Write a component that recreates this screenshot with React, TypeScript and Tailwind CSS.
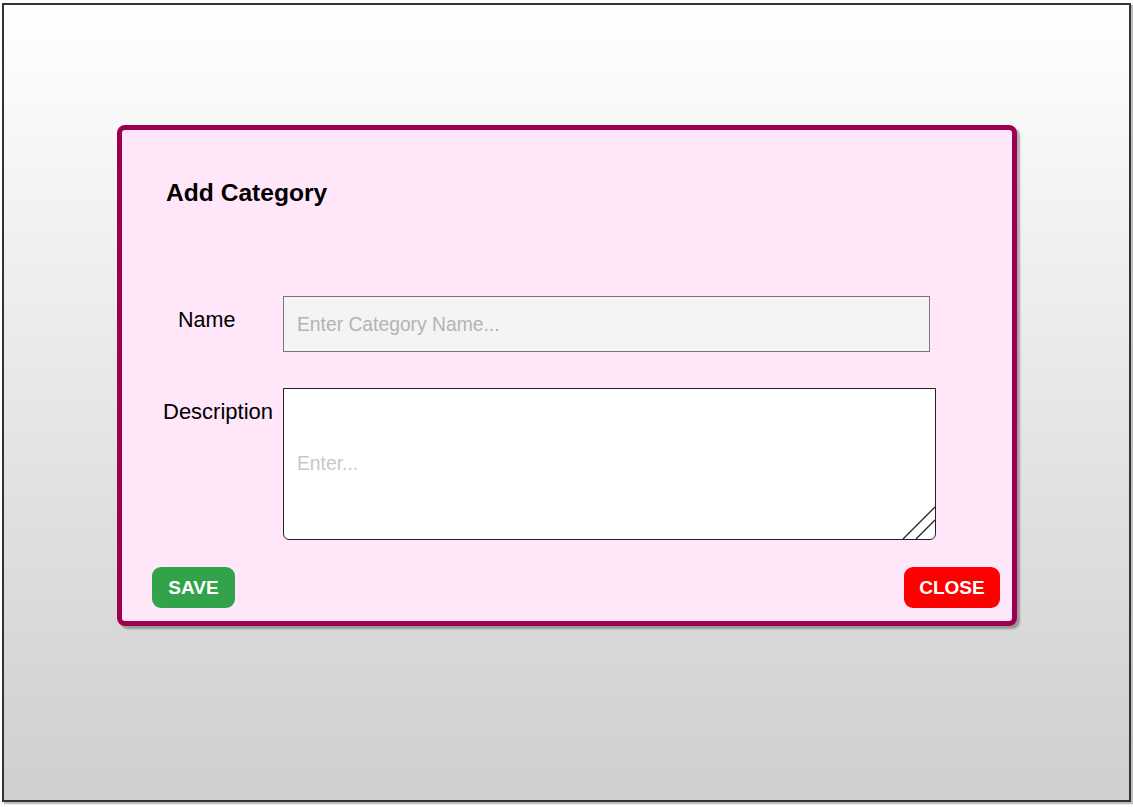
import React from "react";

const App = () => {
    return (
        <div className="w-[1133px] h-[807px] bg-white pt-[3px] pl-[2px] overflow-hidden" style={{ fontFamily: '"Liberation Sans", Arial, sans-serif' }}>
            <div className="w-[1129px] h-[799px] border-2 border-[#333333] bg-gradient-to-b from-white to-[#cfcfcf] pt-[120px] pl-[113px] shadow-[2px_2px_1px_rgba(0,0,0,0.25)]">
                <div className="w-[900px] h-[501px] border-[5px] border-[#9c0050] rounded-[8px] bg-[#ffe6f8] shadow-[3px_3px_2px_rgba(0,0,0,0.3)] flex flex-col">
                    <h2 className="ml-[44px] mt-[49px] text-[24.6px] leading-[28px] font-bold text-black">Add Category</h2>

                    <div className="flex items-start mt-[89px]">
                        <label className="w-[161px] pl-[56px] pt-[10px] text-[21.5px] leading-[28px] text-black">Name</label>
                        <input
                            type="text"
                            placeholder="Enter Category Name..."
                            className="w-[647px] h-[56px] bg-[#f4f4f4] border-[1.5px] border-[#777777] px-[13px] pt-[2px] text-[19.3px] text-black placeholder:text-[#b3b3b3] outline-none"
                        />
                    </div>

                    <div className="flex items-start mt-[36px]">
                        <label className="w-[161px] pl-[41px] pt-[10px] text-[22px] leading-[28px] text-black">Description</label>
                        <div className="relative w-[653px] h-[152px]">
                            <textarea
                                placeholder="Enter..."
                                className="w-full h-full resize-none bg-white border-[1.5px] border-[#222222] rounded-b-[6px] px-[13px] pt-[63px] text-[19.3px] leading-[24px] text-black placeholder:text-[#c8c8c8] outline-none"
                            />
                            <svg className="absolute right-0 bottom-0" width="34" height="34" viewBox="0 0 34 34" fill="none" stroke="#222" strokeWidth="1.3">
                                <line x1="1" y1="33" x2="33" y2="1" />
                                <line x1="14" y1="33" x2="33" y2="14" />
                            </svg>
                        </div>
                    </div>

                    <div className="flex justify-between items-center mt-[27px] pl-[30px] pr-[12px]">
                        <button type="button" className="w-[83px] h-[41px] pt-[2px] rounded-[9px] bg-[#33a34b] text-white text-[19px] font-bold">SAVE</button>
                        <button type="button" className="w-[96px] h-[41px] pt-[2px] rounded-[9px] bg-[#ff0000] text-white text-[19px] font-bold">CLOSE</button>
                    </div>
                </div>
            </div>
        </div>
    );
}

export default App;
